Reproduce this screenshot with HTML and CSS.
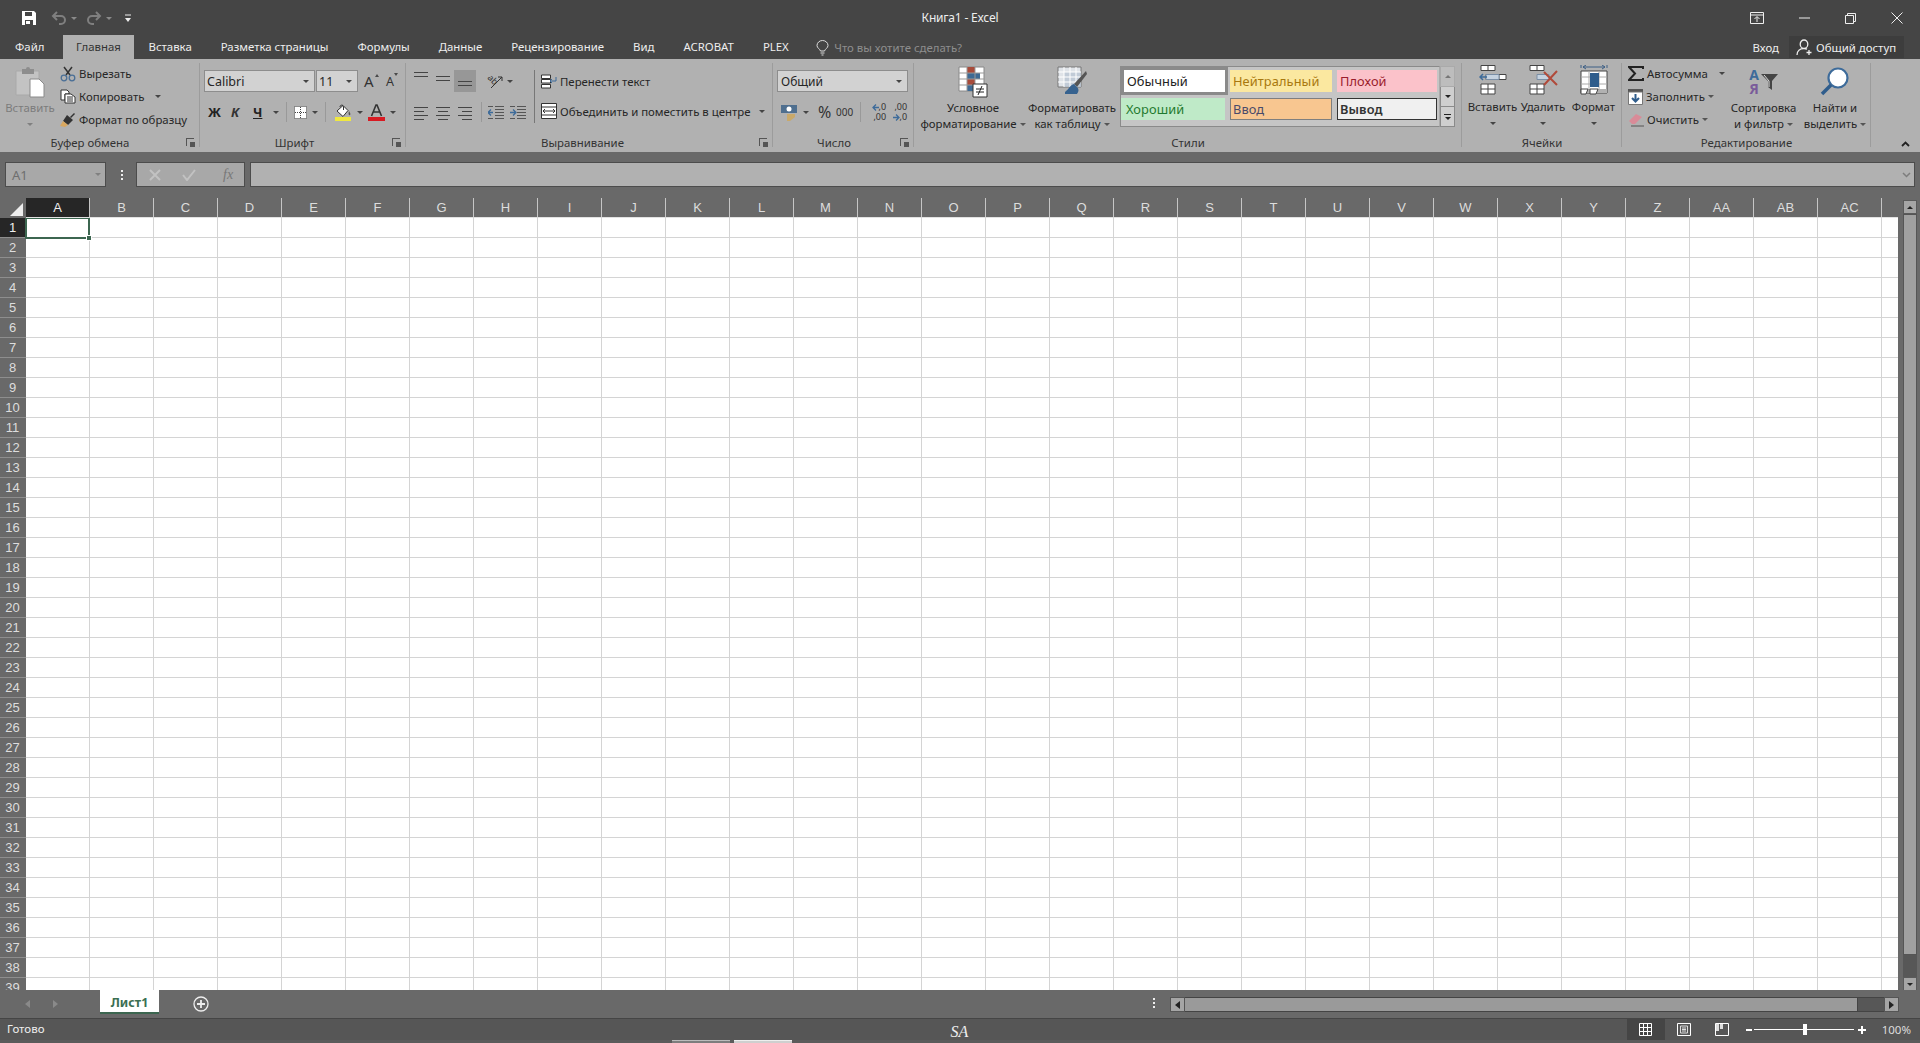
FILE: index.html
```html
<!DOCTYPE html>
<html lang="ru">
<head>
<meta charset="utf-8">
<title>Книга1 - Excel</title>
<link rel="stylesheet" href="styles.css">
</head>
<body>
<div class="app">
  <header class="titlebar">
    <div class="qat">
      <svg class="i-save" width="16" height="16" viewBox="0 0 16 16"><path d="M1 1h12l2 2v12H1z" fill="#fff"/><path d="M4 2h7v4H4z" fill="#454545"/><path d="M4 10h8v5H4z" fill="#454545"/><path d="M5 11h4v3H5z" fill="#fff"/></svg>
      <svg class="i-undo" width="16" height="14" viewBox="0 0 16 14"><path d="M6 1 2 5l4 4M2 5h8a4 4 0 0 1 4 4 4 4 0 0 1-4 4H8" fill="none" stroke="#7f7f7f" stroke-width="2"/></svg>
      <span class="caret dim-caret"></span>
      <svg class="i-redo" width="16" height="14" viewBox="0 0 16 14"><path d="m10 1 4 4-4 4M14 5H6a4 4 0 0 0-4 4 4 4 0 0 0 4 4h2" fill="none" stroke="#7f7f7f" stroke-width="2"/></svg>
      <span class="caret dim-caret"></span>
      <svg class="i-cust" width="8" height="9" viewBox="0 0 8 9"><path d="M1 1h6" stroke="#eee"/><path d="M1 4h6l-3 4z" fill="#eee"/></svg>
    </div>
    <div class="doc-title">Книга1 - Excel</div>
    <div class="winctl">
      <svg width="14" height="12" viewBox="0 0 14 12"><path d="M.5.5h13v11H.5zM1 3h12M7 10V5M4.500 7 7 4.500 9.500 7" fill="none" stroke="#eee"/></svg>
      <svg width="11" height="2" viewBox="0 0 11 2"><path d="M0 1h11" stroke="#eee"/></svg>
      <svg width="11" height="11" viewBox="0 0 11 11"><path d="M.5 2.500h8v8h-8zM2.500 2.500v-2h8v8h-2" fill="none" stroke="#eee"/></svg>
      <svg width="12" height="12" viewBox="0 0 12 12"><path d="m.5.5 11 11M11.500.5l-11 11" fill="none" stroke="#eee"/></svg>
    </div>
  </header>

  <nav class="tabs">
    <span class="tab tab-file">Файл</span>
    <span class="tab tab-active">Главная</span>
    <span class="tab">Вставка</span>
    <span class="tab">Разметка страницы</span>
    <span class="tab">Формулы</span>
    <span class="tab">Данные</span>
    <span class="tab">Рецензирование</span>
    <span class="tab">Вид</span>
    <span class="tab">ACROBAT</span>
    <span class="tab">PLEX</span>
    <svg class="i-bulb" width="13" height="16" viewBox="0 0 13 16"><path d="M4.500 11C4 9 1 8 1 5.500a5.500 5 0 0 1 11 0C12 8 9 9 8.500 11zM4.500 13h4M5.500 15h2" fill="none" stroke="#ddd"/></svg>
    <span class="tell">Что вы хотите сделать?</span>
    <span class="spacer"></span>
    <span class="signin">Вход</span>
    <span class="share">
      <svg width="17" height="17" viewBox="0 0 17 17"><path d="M8 1a3.800 4.200 0 0 1 0 8.400A3.800 4.200 0 0 1 8 1zM1 16c0-4 3-6.500 7-6.500 1 0 2 .2 3 .6M13 11v5M10.500 13.500h5" fill="none" stroke="#eee" stroke-width="1.300"/></svg>
      Общий доступ
    </span>
  </nav>

  <section class="ribbon">
    <div class="group g-clip">
      <div class="group-body">
        <div class="big paste">
          <svg class="big-icon" width="30" height="32" viewBox="0 0 30 32"><path d="M1 5h23v24H1z" fill="#c3c3c3" stroke="#a9a9a9"/><path d="M7 3h4a2 2 0 0 1 4 0h4v5H7z" fill="#8d8d8d"/><path d="M15 13h9l5 5v13H15z" fill="#fff" stroke="#8a8a8a"/></svg>
          <span class="dis">Вставить</span>
          <span class="caret big-caret dis-caret"></span>
        </div>
        <div class="small-col">
          <div class="small"><svg width="16" height="16" viewBox="0 0 16 16"><path d="M4 1 10 9M12 1 6 9" stroke="#333" stroke-width="1.500" fill="none"/><circle cx="4" cy="12" r="2.800" fill="none" stroke="#4a6f96" stroke-width="1.300"/><circle cx="12" cy="12" r="2.800" fill="none" stroke="#4a6f96" stroke-width="1.300"/></svg>Вырезать</div>
          <div class="small"><svg width="16" height="15" viewBox="0 0 16 15"><path d="M1 1h6l2 2v2H5v6H1z" fill="#fff" stroke="#333"/><path d="M5 5h6l4 3v6H5z" fill="#fff" stroke="#333"/><path d="M7 8h6M7 10h6M7 12h6" stroke="#333"/></svg>Копировать<span class="caret gap-caret"></span></div>
          <div class="small"><svg width="16" height="16" viewBox="0 0 16 16"><path d="m10 5 4-4 1 1-4 4z" fill="#333"/><path d="M7 3 13 8 8 13 3 9z" fill="#333"/><path d="M3 9 8 13 5 15 0 14z" fill="#d9a860"/></svg>Формат по образцу</div>
        </div>
      </div>
      <div class="group-label label-clip">Буфер обмена<span class="launcher"></span></div>
    </div>

    <div class="group g-font">
      <div class="group-body stack">
        <div class="row">
          <div class="select sel-font">Calibri<span class="caret"></span></div>
          <div class="select sel-size">11<span class="caret"></span></div>
          <span class="grow">A<i class="up"></i></span>
          <span class="shrink">A<i class="down"></i></span>
        </div>
        <div class="row row-font">
          <b class="fb">Ж</b><b class="fi">К</b><b class="fu">Ч</b>
          <span class="caret"></span>
          <i class="vsep"></i>
          <svg width="13" height="13" viewBox="0 0 13 13"><path d="M.5.5h12v12H.5z" fill="#fff" stroke="#444" stroke-dasharray="1 1"/><path d="M6.500 1v11M1 6.500h11" stroke="#444" stroke-dasharray="1 1"/></svg>
          <span class="caret"></span>
          <i class="vsep vs-fill"></i>
          <svg width="17" height="17" viewBox="0 0 17 17"><path d="M2 7 8 1.500l5 5-5 6z" fill="#fff" stroke="#333"/><path d="M5 3c0-2.500 3.500-2.500 3.500 0v3" fill="none" stroke="#333"/><path d="M14 7c1 2 2 3 1 4s-2-1-1-4z" fill="#555"/><path d="M0 13h16v4H0z" fill="#f0e840"/></svg>
          <span class="caret"></span>
          <svg class="i-color" width="17" height="17" viewBox="0 0 17 17"><path d="M3.500 12 8 1h1l4.500 11M5.500 8h6" fill="none" stroke="#333" stroke-width="1.600"/><path d="M0 13h17v4H0z" fill="#d81a22"/></svg>
          <span class="caret"></span>
        </div>
      </div>
      <div class="group-label label-font">Шрифт<span class="launcher"></span></div>
    </div>

    <div class="group g-align">
      <div class="group-body al-body">
        <div class="stack al-left">
          <div class="row row-al">
            <span class="lines l-top"><i></i><i></i><i></i></span>
            <span class="lines l-mid"><i></i><i></i><i></i></span>
            <span class="lines l-bot active"><i></i><i></i><i></i></span>
            <svg class="i-orient" width="18" height="16" viewBox="0 0 18 16"><text x="2" y="9" class="orient-t" transform="rotate(45 6 6)">ab</text><path d="M5 15 16 4M16 4h-4M16 4v4" stroke="#333" fill="none"/></svg>
            <span class="caret"></span>
          </div>
          <div class="row row-al">
            <span class="lines l-a"><i></i><i></i><i></i><i></i></span>
            <span class="lines l-b"><i></i><i></i><i></i><i></i></span>
            <span class="lines l-c"><i></i><i></i><i></i><i></i></span>
            <i class="vsep vs-al"></i>
            <svg width="16" height="13" viewBox="0 0 16 13"><path d="M7 .5h9M7 3.500h9M7 6.500h9M7 9.500h9M7 12.500h9M0 .5h5M0 12.500h5" stroke="#555"/><path d="M5 6.500H0M3 3.500l-3 3 3 3" stroke="#3d6b9a" fill="none" stroke-width="1.300"/></svg>
            <svg class="i-ind" width="16" height="13" viewBox="0 0 16 13"><path d="M7 .5h9M7 3.500h9M7 6.500h9M7 9.500h9M7 12.500h9M0 .5h5M0 12.500h5" stroke="#555"/><path d="M0 6.500h5M3 3.500l3 3-3 3" stroke="#3d6b9a" fill="none" stroke-width="1.300"/></svg>
          </div>
        </div>
        <div class="al-right">
          <div class="small wrap"><svg width="16" height="15" viewBox="0 0 16 15"><path d="M.5 1h9v3.500h-9zM.5 5.500h9V9h-9zM.5 10.500h9V14h-9z" fill="#fff" stroke="#333"/><path d="M15 3v4h-6M11 5 9 7l2 2" fill="none" stroke="#3d6b9a"/></svg>Перенести текст</div>
          <div class="small merge"><svg width="16" height="16" viewBox="0 0 16 16"><path d="M.5.5h15v15H.5z" fill="#fff" stroke="#333"/><path d="M0 4h16M0 12h16" stroke="#333"/><path d="M2 8h12M4 6 2 8l2 2M12 6l2 2-2 2" fill="none" stroke="#333"/></svg>Объединить и поместить в центре<span class="caret gap-caret2"></span></div>
        </div>
      </div>
      <div class="group-label label-al">Выравнивание<span class="launcher"></span></div>
    </div>

    <div class="group g-num">
      <div class="group-body stack">
        <div class="row"><div class="select sel-num">Общий<span class="caret"></span></div></div>
        <div class="row row-num">
          <svg width="17" height="17" viewBox="0 0 17 17"><path d="M0 1h16v8H0z" fill="#4f6f8f"/><circle cx="8" cy="5" r="2.500" fill="#fff"/><path d="M6 10h8v3l-5 4H6z" fill="#c9a96a"/></svg>
          <span class="caret"></span>
          <span class="pct">%</span>
          <span class="thou">000</span>
          <i class="vsep"></i>
          <span class="dec">
            <span class="dt"><svg width="7" height="7" viewBox="0 0 7 7"><path d="M7 3.500H1M4 .5l-3 3 3 3" fill="none" stroke="#3d6b9a" stroke-width="1.300"/></svg>,0</span>
            <span class="dt">,00</span>
          </span>
          <span class="dec">
            <span class="dt">,00</span>
            <span class="dt"><svg width="7" height="7" viewBox="0 0 7 7"><path d="M0 3.500h6M3 .5l3 3-3 3" fill="none" stroke="#3d6b9a" stroke-width="1.300"/></svg>,0</span>
          </span>
        </div>
      </div>
      <div class="group-label label-num">Число<span class="launcher"></span></div>
    </div>

    <div class="group g-styles">
      <div class="group-body styles-body">
        <div class="big cond">
          <svg class="big-icon" width="30" height="32" viewBox="0 0 30 32"><path d="M1 1h25v24H1z" fill="#fff" stroke="#888"/><path d="M9 1h8v6H9z" fill="#a84b3a"/><path d="M9 7h13v6H9z" fill="#3e6a94"/><path d="M9 13h8v6H9z" fill="#a84b3a"/><path d="M9 19h6v6H9z" fill="#3e6a94"/><path d="M1 7h25M1 13h25M1 19h25M9 1v24M17 1v24" stroke="#999" fill="none"/><path d="M15 18h14v13H15z" fill="#fff" stroke="#333"/><path d="M18 23h8M18 26h8M24 20l-4 9" stroke="#222" fill="none"/></svg>
          <span>Условное</span>
          <span>форматирование<span class="caret inline"></span></span>
        </div>
        <div class="big astable">
          <svg class="big-icon" width="30" height="32" viewBox="0 0 30 32"><path d="M1 1h23v20H1z" fill="#dfe3e8" stroke="#777"/><path d="M7 6h17v15H7z" fill="#b9c4d2" opacity=".8"/><path d="M1 6h23M1 11h23M1 16h23M7 1v20M13 1v20M19 1v20" stroke="#fff"/><path d="M29 5 17 18l3 3L30 8z" fill="#555"/><path d="M17 18c-4 1-5 5-9 8v2h12c2-3 2-5 0-7z" fill="#36628f"/></svg>
          <span>Форматировать</span>
          <span>как таблицу<span class="caret inline"></span></span>
        </div>
        <div class="gallery">
          <div class="style-grid">
            <span class="st st-normal">Обычный</span>
            <span class="st st-neutral">Нейтральный</span>
            <span class="st st-bad">Плохой</span>
            <span class="st st-good">Хороший</span>
            <span class="st st-input">Ввод</span>
            <span class="st st-output">Вывод</span>
          </div>
          <div class="gal-scroll">
            <span class="gb gb-up"><span class="caret up-caret"></span></span>
            <span class="gb"><span class="caret dark"></span></span>
            <span class="gb gb-more"><i></i><span class="caret dark"></span></span>
          </div>
        </div>
      </div>
      <div class="group-label">Стили</div>
    </div>

    <div class="group g-cells">
      <div class="group-body cells-body">
        <div class="big cb">
          <svg class="big-icon" width="28" height="30" viewBox="0 0 28 30"><path d="M2 .5h14v5H2zM9 .5v5M7 9.500h20v5H7zM14 9.500v5M20 9.500v5M2 19h14v10H2zM2 24h14M9 19v10" fill="#fff" stroke="#444"/><path d="M7 9.500h13v5H7z" fill="#c5d2e0" stroke="#7a8ea5"/><path d="M8 12H1M4 9l-3 3 3 3" fill="none" stroke="#3d6b9a" stroke-width="1.500"/></svg>
          <span>Вставить</span>
          <span class="caret big-caret"></span>
        </div>
        <div class="big cb">
          <svg class="big-icon" width="30" height="30" viewBox="0 0 30 30"><path d="M2 .5h14v5H2zM9 .5v5M2 19h14v10H2zM2 24h14M9 19v10" fill="#fff" stroke="#444"/><path d="M9 9.500h12v5H9z" fill="#c5d2e0" stroke="#7a8ea5"/><path d="m16 7 13 13M29 6 16 20" stroke="#b04a3a" stroke-width="2"/></svg>
          <span>Удалить</span>
          <span class="caret big-caret"></span>
        </div>
        <div class="big cb">
          <svg class="big-icon" width="28" height="30" viewBox="0 0 28 30"><path d="M1 3V0M27 3V0M3 2h22M6 0 3 2l3 2M22 0l3 2-3 2" fill="none" stroke="#3d5f85"/><path d="M1 6h26v22H1z" fill="#fff" stroke="#444"/><path d="M1 12h26M1 19h26M9 6v22M19 6v22" stroke="#aaa"/><path d="M10 8h9v14h-9z" fill="#2f5d8c"/><path d="M1 24h26v4H1z" fill="#b1b1b1"/><path d="M1 24h7l-2 5H1zM10 24h8l-2 5h-6z" fill="#fff" stroke="#444"/></svg>
          <span>Формат</span>
          <span class="caret big-caret"></span>
        </div>
      </div>
      <div class="group-label">Ячейки</div>
    </div>

    <div class="group g-edit">
      <div class="group-body">
        <div class="small-col edit-col">
          <div class="small"><svg width="16" height="15" viewBox="0 0 16 15"><path d="M15 3V1H1l6 6.500L1 14h14v-2" fill="none" stroke="#222" stroke-width="2"/></svg>Автосумма<span class="caret gap-caret"></span></div>
          <div class="small"><svg width="15" height="16" viewBox="0 0 15 16"><path d="M0 0h15v4H0z" fill="#555"/><path d="M.5 3h14v12.500H.5z" fill="#fff" stroke="#777"/><path d="M7.500 5v7M4 9l3.500 3.500L11 9" fill="none" stroke="#2f5d8c" stroke-width="2"/></svg>Заполнить<span class="caret inline"></span></div>
          <div class="small"><svg width="16" height="15" viewBox="0 0 16 15"><path d="m1 9 7-7 6 3-7 7H4z" fill="#d98b98"/><path d="M3 14h13" stroke="#555"/></svg>Очистить<span class="caret inline"></span></div>
        </div>
        <div class="big sortb">
          <div class="sort-icon">
            <div class="az-stack"><span class="az az-a">А</span><span class="az az-z">Я</span></div>
            <svg width="17" height="17" viewBox="0 0 17 17"><path d="M0 0h17l-6 7v9l-4-3V7z" fill="#444"/><path d="m3 1 5 6v6" fill="none" stroke="#ddd"/></svg>
          </div>
          <span>Сортировка</span>
          <span>и фильтр<span class="caret inline"></span></span>
        </div>
        <div class="big findb">
          <svg class="big-icon" width="30" height="30" viewBox="0 0 30 30"><circle cx="18" cy="11" r="9.500" fill="#fff" stroke="#3d6b9a" stroke-width="2.200"/><path d="m11 18-9 9" stroke="#2f5d8c" stroke-width="3.500"/></svg>
          <span>Найти и</span>
          <span>выделить<span class="caret inline"></span></span>
        </div>
      </div>
      <div class="group-label">Редактирование</div>
    </div>

    <div class="collapse"><svg width="9" height="6" viewBox="0 0 9 6"><path d="m1 5 3.500-3.500L8 5" fill="none" stroke="#222" stroke-width="1.800"/></svg></div>
  </section>

  <section class="fbar">
    <div class="namebox">A1<span class="caret dis-caret"></span></div>
    <span class="dots"><i></i><i></i><i></i></span>
    <div class="fx">
      <svg width="12" height="12" viewBox="0 0 12 12"><path d="m1 1 10 10M11 1 1 11" stroke="#c2c2c2" stroke-width="2"/></svg>
      <svg width="14" height="12" viewBox="0 0 14 12"><path d="m1 6 4 5 8-10" fill="none" stroke="#c2c2c2" stroke-width="2"/></svg>
      <span class="fx-t">fx</span>
    </div>
    <div class="finput"><svg width="9" height="6" viewBox="0 0 9 6"><path d="m1 1 3.500 3.500L8 1" fill="none" stroke="#7d7d7d" stroke-width="1.500"/></svg></div>
  </section>

  <section class="sheet">
    <div class="sheet-main">
      <div class="colheads">
        <span class="corner"><i></i></span>
        <span class="ch ch-sel">A</span><span class="ch">B</span><span class="ch">C</span><span class="ch">D</span><span class="ch">E</span><span class="ch">F</span><span class="ch">G</span><span class="ch">H</span><span class="ch">I</span><span class="ch">J</span><span class="ch">K</span><span class="ch">L</span><span class="ch">M</span><span class="ch">N</span><span class="ch">O</span><span class="ch">P</span><span class="ch">Q</span><span class="ch">R</span><span class="ch">S</span><span class="ch">T</span><span class="ch">U</span><span class="ch">V</span><span class="ch">W</span><span class="ch">X</span><span class="ch">Y</span><span class="ch">Z</span><span class="ch">AA</span><span class="ch">AB</span><span class="ch">AC</span><span class="ch-rest"></span>
      </div>
      <div class="grid-row">
        <div class="rowheads">
          <span class="rh rh-sel">1</span><span class="rh">2</span><span class="rh">3</span><span class="rh">4</span><span class="rh">5</span><span class="rh">6</span><span class="rh">7</span><span class="rh">8</span><span class="rh">9</span><span class="rh">10</span><span class="rh">11</span><span class="rh">12</span><span class="rh">13</span><span class="rh">14</span><span class="rh">15</span><span class="rh">16</span><span class="rh">17</span><span class="rh">18</span><span class="rh">19</span><span class="rh">20</span><span class="rh">21</span><span class="rh">22</span><span class="rh">23</span><span class="rh">24</span><span class="rh">25</span><span class="rh">26</span><span class="rh">27</span><span class="rh">28</span><span class="rh">29</span><span class="rh">30</span><span class="rh">31</span><span class="rh">32</span><span class="rh">33</span><span class="rh">34</span><span class="rh">35</span><span class="rh">36</span><span class="rh">37</span><span class="rh">38</span><span class="rh">39</span>
        </div>
        <div class="cells"><div class="cursor"><i></i></div></div>
      </div>
    </div>
    <div class="vscroll">
      <span class="sb-btn"><span class="caret up-caret dark"></span></span>
      <span class="v-thumb"></span>
      <span class="v-track"></span>
      <span class="sb-btn sb-down"><span class="caret dark"></span></span>
    </div>
  </section>

  <section class="tabbar">
    <span class="nav-arrow"><i class="al"></i></span>
    <span class="nav-arrow na2"><i class="ar"></i></span>
    <span class="sheet-tab">Лист1</span>
    <svg class="addsheet" width="16" height="16" viewBox="0 0 16 16"><circle cx="8" cy="8" r="7" fill="none" stroke="#eee" stroke-width="1.300"/><path d="M8 4v8M4 8h8" stroke="#eee" stroke-width="1.800"/></svg>
    <span class="spacer"></span>
    <span class="dots dots-w"><i></i><i></i><i></i></span>
    <div class="hscroll">
      <span class="hb"><i class="al dark-a"></i></span>
      <span class="h-thumb"></span>
      <span class="h-track"></span>
      <span class="hb hb-r"><i class="ar dark-a"></i></span>
    </div>
  </section>

  <footer class="status">
    <span class="ready">Готово</span>
    <span class="sa">SA</span>
    <span class="spacer"></span>
    <span class="view view-on"><svg width="13" height="13" viewBox="0 0 13 13"><path d="M.5.5h12v12H.5zM.5 4.500h12M.5 8.500h12M4.500.5v12M8.500.5v12" fill="none" stroke="#fff"/></svg></span>
    <span class="view"><svg width="14" height="13" viewBox="0 0 14 13"><path d="M.5.5h13v12H.5z" fill="none" stroke="#fff"/><path d="M3.500 3h7v7h-7zM5 5h4M5 6.500h4M5 8h4" fill="none" stroke="#ddd"/></svg></span>
    <span class="view"><svg width="14" height="13" viewBox="0 0 14 13"><path d="M.5.5h13v12H.5z" fill="none" stroke="#fff"/><path d="M1 1h3v7H1zM5 1h3v5H5z" fill="#ddd"/></svg></span>
    <span class="zm-minus"></span>
    <span class="slider"><i></i></span>
    <span class="zm-plus"></span>
    <span class="pctz">100%</span>
  </footer>
  <div class="taskstrip"><i></i><i class="ts2"></i></div>
</div>
</body>
</html>
```
FILE: styles.css
```css
*{box-sizing:border-box}
html,body{margin:0;padding:0;height:100%;overflow:hidden}
body{font-family:"Noto Sans","Open Sans",sans-serif;font-size:11.4px;color:#262626;background:#696969}
.app{width:1920px;height:1043px;display:flex;flex-direction:column;overflow:hidden}
.spacer{flex:1}
i{font-style:normal}
.caret{display:inline-block;width:0;height:0;border:3px solid transparent;border-top:3.5px solid #444;border-bottom:0;flex:none}
.caret.dark{border-top-color:#222}
.up-caret{border-top:0;border-bottom:3.5px solid #777}
.up-caret.dark{border-bottom-color:#222}
.dim-caret{border-top-color:#8a8a8a}
.dis-caret{border-top-color:#808080}
.inline{margin-left:3px;vertical-align:middle;border-top-color:#555}

/* title bar */
.titlebar{height:36px;background:#454545;display:grid;grid-template-columns:1fr auto 1fr;align-items:center;flex:none}
.qat{display:flex;align-items:center;padding-left:21px}
.i-undo{margin-left:14px}
.dim-caret{margin-left:4px}
.i-redo{margin-left:9px}
.i-cust{margin-left:12px}
.doc-title{color:#eee;font-size:12px;letter-spacing:-.2px;margin-top:-1px}
.winctl{display:flex;justify-content:flex-end;align-items:center;padding-right:17px;gap:35px}

/* tabs */
.tabs{height:23px;background:#454545;display:flex;align-items:center;color:#eee;flex:none;position:relative}
.tab{padding:0 14.5px;height:23px;line-height:22px;white-space:nowrap;flex:none}
.tab-file{width:63px;padding:0 0 0 15px}
.tab-active{background:#b1b1b1;color:#333;height:24px;margin-top:-1px;line-height:24px;padding:0;width:71px;text-align:center}
.i-bulb{margin-left:13px}
.tell{color:#8e8e8e;margin-left:5px}
.signin{margin-right:10px}
.share{background:#3d3d3d;height:22px;width:115px;display:flex;align-items:center;gap:3px;padding-left:7px;margin-right:16px;margin-top:-1px}

/* ribbon */
.ribbon{height:93px;background:#b1b1b1;display:flex;flex:none}
.group{display:flex;flex-direction:column;position:relative}
.group::after{content:"";position:absolute;right:0;top:4px;bottom:5px;width:1px;background:#9c9c9c}
.group-body{height:75px;display:flex;flex:none}
.group-label{height:18px;line-height:18px;text-align:center;color:#333;position:relative}
.label-clip{padding-right:20px}
.label-font{padding-right:17px}
.label-num{padding-right:19px}
.launcher{position:absolute;right:6px;top:4px;width:8px;height:8px;border-left:1px solid #555;border-top:1px solid #555}
.launcher::after{content:"";position:absolute;right:-1px;bottom:-1px;width:5px;height:5px;background:#555}
.g-clip{width:200px}
.g-font{width:206px}
.g-align{width:367px}
.g-num{width:141px}
.g-styles{width:548px}
.g-cells{width:160px}
.g-edit{width:249px}
.collapse{flex:1;display:flex;justify-content:flex-end;align-items:flex-end;padding:0 10px 5px 0}

.big{display:flex;flex-direction:column;align-items:center;padding-top:7px;line-height:16px;white-space:nowrap;flex:none}
.big-icon{height:32px;margin-bottom:2px;flex:none}
.big-caret{margin-top:7px}
.paste{width:48px;margin-left:6px}
.dis{color:#7c7c7c}
.small-col{display:flex;flex-direction:column;padding-top:3px;margin-left:6px}
.small{height:23px;display:flex;align-items:center;white-space:nowrap}
.small svg{margin-right:3px;flex:none}
.gap-caret{margin-left:11px}
.gap-caret2{margin-left:9px}

.stack{display:flex;flex-direction:column;padding-top:11px;gap:9px}
.row{display:flex;align-items:center;height:22px}
.select{height:22px;background:#d2d2d2;border:1px solid #8d8d8d;display:flex;align-items:center;justify-content:space-between;padding:0 5px 0 2px;font-size:12.500px}
.sel-font{width:111px;margin-left:4px}
.sel-size{width:42px;margin-left:1px}
.grow{font-size:15px;margin-left:6px;position:relative;width:22px;color:#333}
.shrink{font-size:12.500px;position:relative;width:17px;color:#333}
.grow .up{position:absolute;left:11px;top:3px;border:2.500px solid transparent;border-bottom:3px solid #4a4a4a;border-top:0}
.shrink .down{position:absolute;left:8px;top:0;border:2.500px solid transparent;border-top:3px solid #4a4a4a;border-bottom:0}
.row-font{padding-left:8px}
.row-font .caret{margin-left:5px}
.fb{font-size:13px;width:23px;color:#222}
.fi{font-style:italic;font-size:13px;width:22px;color:#333}
.fu{font-size:13px;width:15px;text-decoration:underline;color:#222}
.vsep{width:1px;height:20px;background:#999;display:block;margin:0 7px 0 7px;flex:none}
.vs-fill{margin-right:9px}
.i-color{margin-left:5px}

.al-body{position:relative}
.al-left{width:127px;padding-left:4px;flex:none}
.row-al{position:relative}
.lines{width:22px;height:22px;display:flex;flex-direction:column;align-items:center;gap:3px;padding:5px 0;flex:none}
.lines i{display:block;width:14px;height:1px;background:#444;flex:none}
.l-top{padding-top:2px}
.l-top i:last-child,.l-mid i:last-child,.l-bot i:last-child{display:none}
.l-mid{padding-top:6px}
.l-bot{padding-top:11px}
.active{background:#979797}
.l-a,.l-b,.l-c{gap:3px;padding-top:6px}
.l-a i:nth-child(even){width:10px;margin-right:4px}
.l-c i:nth-child(even){width:10px;margin-left:4px}
.l-b i:nth-child(even){width:10px}
.i-orient{margin-left:10px;overflow:visible}
.orient-t{font-size:9px;fill:#333;font-family:"Noto Sans",sans-serif}
.row-al .caret{margin-left:3px}
.vs-al{margin:0 6px 0 5px}
.i-ind{margin-left:6px}
.al-right{position:relative;margin-left:1px;padding-left:7px;padding-top:11px;display:flex;flex-direction:column;gap:8px;width:236px}
.al-right::before{content:"";position:absolute;left:0;top:11px;width:1px;height:53px;background:#777}
.al-right .small{height:22px}
.label-al{text-align:left;padding-left:135px}

.sel-num{width:131px;margin-left:4px;padding-left:3px;font-size:12px}
.row-num{padding-left:8px}
.row-num .caret{margin-left:5px}
.pct{font-size:16px;margin-left:9px;color:#333;width:16px}
.thou{font-size:10px;margin-left:2px;color:#333}
.row-num .vsep{margin:0 7px 0 7px}
.dec{font-size:9px;line-height:10px;color:#333;width:21px;height:20px;flex:none;display:flex;flex-direction:column;align-items:flex-end;padding-right:3px}
.dt{display:flex;align-items:center;height:10px}

.styles-body{position:relative}
.cond{width:108px;margin-left:5px}
.astable{width:90px}
.gallery{display:flex;margin-left:3px;margin-top:7px;height:61px;width:335px;flex:none}
.style-grid{width:320px;background:#c5c5c5;border:1px solid #8a8a8a;display:grid;grid-template-columns:107px 107px 105px;grid-template-rows:29px 30px;font-size:12.800px;border-right:1px solid #aaa;flex:none}
.st{display:flex;align-items:center;padding-left:3px;margin:3px 3px 4px 2px;letter-spacing:.1px}
.st-normal{background:#fff;color:#222;border:3px solid #8a8a8a;margin:0 0 1px 0;padding-left:3px}
.st-neutral{background:#fbe8a0;color:#a8780e}
.st-bad{background:#fbc2ca;color:#9a1c2c}
.st-good{background:#bfeac8;color:#1f7a2f;margin:2px 3px 6px 0;padding-left:5px}
.st-input{background:#f8c690;color:#4a4a6a;border:1px solid #7f7f7f;margin:2px 3px 6px 2px;padding-left:2px}
.st-output{background:#f0f0f0;color:#333;border:1px solid #333;margin:2px 3px 6px 2px;font-weight:600;padding-left:2px}
.gal-scroll{display:flex;flex-direction:column;width:15px;flex:none}
.gb{flex:1;background:#cfcfcf;border:1px solid #8a8a8a;border-top:0;display:flex;flex-direction:column;align-items:center;justify-content:center;gap:2px}
.gb-up{border-top:1px solid #aaa;background:#bdbdbd;border-color:#aaa}
.gb-more i{display:block;width:7px;height:1px;background:#222}

.cells-body{padding-left:5px}
.cb{width:51px;padding-top:7px}
.cb:nth-child(2){width:50px}
.cb .big-icon{height:30px;margin-bottom:4px;margin-top:-1px}

.edit-col{margin-left:6px;width:118px}
.sortb{width:69px}
.findb{width:72px;margin-left:1px}
.sort-icon{display:flex;align-items:center;gap:2px;height:32px;margin-bottom:2px;flex:none}
.az-stack{display:flex;flex-direction:column}
.az{display:block;height:14px;line-height:14px;font-size:14px;font-weight:700}
.az-a{color:#3d6b9a}
.az-z{color:#7a5b9a}

/* formula bar */
.fbar{height:46px;background:#696969;display:flex;padding:10px 5px 11px 5px;flex:none;align-items:stretch}
.namebox{width:101px;background:#a8a8a8;border:1px solid #4c4c4c;display:flex;align-items:center;justify-content:space-between;padding:0 4px 0 6px;color:#6e6e6e;font-size:13px}
.dots{display:flex;flex-direction:column;gap:2px;justify-content:center;margin:0 13px 0 15px}
.dots i{display:block;width:2px;height:2px;background:#eee}
.fx{width:109px;background:#a8a8a8;border:1px solid #4c4c4c;display:flex;align-items:center;gap:21px;padding-left:12px;margin-right:5px}
.fx-t{font-family:"Liberation Serif",serif;font-style:italic;font-size:14px;color:#777;margin-left:6px}
.finput{flex:1;background:#b1b1b1;border:1px solid #4c4c4c;display:flex;align-items:center;justify-content:flex-end;padding-right:3px}

/* sheet */
.sheet{height:792px;display:flex;flex:none;background:#696969}
.sheet-main{width:1898px;display:flex;flex-direction:column}
.colheads{height:20px;display:flex;flex:none;background:#696969}
.corner{width:26px;flex:none;position:relative}
.corner i{position:absolute;right:3px;bottom:2px;width:0;height:0;border-left:13px solid transparent;border-bottom:13px solid #eee}
.ch{width:64px;flex:none;border-right:1px solid #c6c6c6;border-bottom:1px solid #e2e2e2;color:#ddd;text-align:center;font-size:13px;line-height:20px;font-family:"Liberation Sans",sans-serif}
.ch-sel{background:#262626;color:#eee}
.ch-rest{flex:1;border-bottom:1px solid #e2e2e2}
.grid-row{height:772px;display:flex;overflow:hidden}
.rowheads{width:26px;flex:none;background:#696969;display:flex;flex-direction:column}
.rh{height:20px;flex:none;border-bottom:1px solid #8e8e8e;color:#ddd;text-align:center;font-size:13px;line-height:20px;padding-right:1px;font-family:"Liberation Sans",sans-serif}
.rh-sel{background:#262626;color:#eee}
.cells{flex:1;background-color:#fff;background-image:linear-gradient(to right,transparent 63px,#d4d4d4 63px),linear-gradient(to bottom,transparent 19px,#d4d4d4 19px);background-size:64px 20px;position:relative}
.cursor{position:absolute;left:-1px;top:-1px;width:65px;height:22px;border:2px solid #3c6650}
.cursor i{position:absolute;right:-4px;bottom:-4px;width:4px;height:4px;background:#3c6650;border:1px solid #fff;box-sizing:content-box}
.vscroll{flex:1;background:#696969;display:flex;flex-direction:column;padding:2px 3px 0 5px}
.sb-btn{height:14px;background:#a5a5a5;border:1px solid #5a5a5a;display:flex;align-items:center;justify-content:center;flex:none}
.sb-down{height:13px;border-bottom:0}
.v-thumb{height:741px;background:#a0a0a0;border:1px solid #555;flex:none}
.v-track{flex:1;background:#575757}

/* tab bar */
.tabbar{height:29px;background:#696969;border-bottom:1px solid #454545;display:flex;flex:none;align-items:flex-start;position:relative}
.nav-arrow{width:10px;height:14px;margin:7px 0 0 25px;display:flex;align-items:center;flex:none}
.na2{margin-left:18px}
.al,.ar{display:block;width:0;height:0;border:4px solid transparent}
.al{border-left:0;border-right:5px solid #8a8a8a}
.ar{border-right:0;border-left:5px solid #8a8a8a}
.dark-a.al{border-right-color:#222}
.dark-a.ar{border-left-color:#222}
.sheet-tab{width:59px;height:24px;margin-left:37px;background:#fff;border-bottom:2px solid #3c6650;color:#3b6f52;font-weight:700;text-align:center;line-height:25px;flex:none;font-size:12.500px}
.addsheet{margin:6px 0 0 34px;flex:none}
.dots-w{margin:8px 15px 0 0;gap:2px}
.hscroll{width:729px;height:15px;margin:7px 21px 0 0;display:flex;flex:none}
.hb{width:15px;background:#a5a5a5;border:1px solid #555;display:flex;align-items:center;justify-content:center;flex:none}
.h-thumb{width:673px;background:#9a9a9a;border-top:1px solid #444;border-bottom:1px solid #444;border-right:1px solid #444;flex:none}
.h-track{flex:1;background:#575757;border-top:1px solid #444;border-bottom:1px solid #444}

/* status */
.status{height:21px;background:#565656;display:flex;align-items:center;color:#eee;flex:none;font-size:11.500px}
.ready{margin-left:7px;margin-top:-2px}
.sa{font-family:"Liberation Serif",serif;font-style:italic;font-size:16px;margin-left:906px;color:#eee;margin-top:5px;line-height:16px}
.view{width:38px;height:21px;display:flex;align-items:center;justify-content:center;flex:none}
.view-on{background:#454545}
.zm-minus{width:6px;height:2px;background:#fff;margin:0 1px 0 5px;flex:none}
.slider{width:100px;height:1px;background:#fff;margin-left:1px;position:relative;flex:none}
.slider i{position:absolute;left:49px;top:-5px;width:4px;height:11px;background:#fff}
.zm-plus{width:8px;height:8px;margin-left:4px;flex:none;background:linear-gradient(#fff,#fff) center/8px 2px no-repeat,linear-gradient(#fff,#fff) center/2px 8px no-repeat}
.pctz{margin:0 9px 0 16px;color:#ddd}
.taskstrip{flex:1;background:#5b5b5b;display:flex;align-items:flex-end;padding-left:672px;gap:4px}
.taskstrip i{display:block;width:58px;height:3px;background:#7d7d7d;border-top:1px solid #bbb}
.taskstrip .ts2{background:#cfcfcf;border-top-color:#eee}
```
